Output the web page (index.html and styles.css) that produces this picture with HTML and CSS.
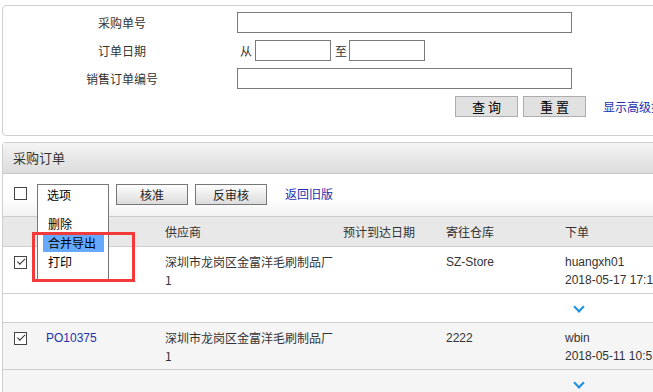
FILE: index.html
```html
<!DOCTYPE html>
<html lang="zh-CN">
<head>
<meta charset="utf-8">
<title>采购订单</title>
<link rel="stylesheet" href="styles.css">
</head>
<body>
<div class="page">
  <div class="search">
    <div class="srow">
      <div class="slabel">采购单号</div>
      <div class="sfield"><span class="inp wide"></span></div>
    </div>
    <div class="srow">
      <div class="slabel">订单日期</div>
      <div class="sfield"><span class="pre">从</span><span class="inp date"></span><span class="mid">至</span><span class="inp date"></span></div>
    </div>
    <div class="srow">
      <div class="slabel">销售订单编号</div>
      <div class="sfield"><span class="inp wide"></span></div>
    </div>
    <div class="srow actions">
      <span class="sbtn">查 询</span><span class="sbtn">重 置</span><a class="adv">显示高级搜索</a>
    </div>
  </div>

  <div class="list">
    <div class="ltitle">采购订单</div>
    <div class="toolbar">
      <span class="cb"></span>
      <span class="selbox">选项</span>
      <span class="tbtn b1">核准</span>
      <span class="tbtn b2">反审核</span>
      <a class="oldlink">返回旧版</a>
      <div class="droplist">
        <div class="opt first">删除</div>
        <div class="opt hl">合并导出</div>
        <div class="opt">打印</div>
      </div>
      <div class="redmark"></div>
    </div>
    <div class="grid head">
      <div></div><div></div><div>供应商</div><div>预计到达日期</div><div>寄往仓库</div><div>下单</div>
    </div>
    <div class="grid row">
      <div><span class="cb checked"></span></div>
      <div></div>
      <div class="sup">深圳市龙岗区金富洋毛刷制品厂1</div>
      <div></div>
      <div>SZ-Store</div>
      <div class="nowrap">huangxh01<br>2018-05-17 17:12:35</div>
    </div>
    <div class="grid expand">
      <div></div><div></div><div></div><div></div><div></div><div><span class="chev"></span></div>
    </div>
    <div class="grid row alt">
      <div><span class="cb checked"></span></div>
      <div><a class="po">PO10375</a></div>
      <div class="sup">深圳市龙岗区金富洋毛刷制品厂1</div>
      <div></div>
      <div>2222</div>
      <div class="nowrap">wbin<br>2018-05-11 10:51:20</div>
    </div>
    <div class="grid expand alt">
      <div></div><div></div><div></div><div></div><div></div><div><span class="chev"></span></div>
    </div>
  </div>
</div>
</body>
</html>
```

FILE: styles.css
```css
html, body {
  margin: 0;
  padding: 0;
  background: #fff;
  overflow: hidden;
  width: 653px;
  height: 392px;
}
.page {
  font-family: "Liberation Sans", "Noto Sans CJK SC", sans-serif;
  font-size: 12px;
  color: #333;
  padding: 5px 0 0 2px;
  width: 760px;
}
.search {
  border: 1px solid #d0d0d0;
  border-radius: 4px;
  height: 129px;
  padding-top: 6px;
  box-sizing: border-box;
  height: 131px;
}
.srow {
  display: flex;
  align-items: center;
  height: 21px;
  margin-bottom: 7px;
}
.slabel {
  width: 230px;
  padding-left: 4px;
  text-align: center;
  font-family: "Noto Sans CJK SC", sans-serif;
  font-size: 12px;
  color: #333;
  line-height: 21px;
}
.sfield {
  display: flex;
  align-items: center;
  height: 21px;
}
.inp {
  display: block;
  box-sizing: border-box;
  height: 21px;
  border: 1px solid #7a7a7a;
  background: #fff;
}
.inp.wide { width: 335px; }
.inp.date { width: 76px; }
.pre {
  width: 18px;
  padding-left: 3px;
  box-sizing: border-box;
  font-family: "Noto Sans CJK SC", sans-serif;
}
.mid {
  width: 18px;
  padding-left: 4px;
  box-sizing: border-box;
  font-family: "Noto Sans CJK SC", sans-serif;
}
.actions {
  padding-left: 452px;
}
.sbtn {
  box-sizing: border-box;
  width: 63px;
  height: 21px;
  border: 1px solid #adadad;
  background: #e1e1e1;
  text-align: center;
  line-height: 19px;
  font-family: "Noto Sans CJK SC", sans-serif;
  font-size: 13px;
  color: #000;
  margin-right: 5px;
}
.adv {
  margin-left: 12px;
  color: #1a2fb0;
  font-family: "Noto Sans CJK SC", sans-serif;
  font-size: 12px;
}

.list {
  margin-top: 6px;
  border: 1px solid #cfcfcf;
  border-right: none;
  border-radius: 4px 0 0 0;
}
.ltitle {
  height: 30px;
  line-height: 30px;
  padding-left: 10px;
  background: linear-gradient(#f4f4f4, #dcdcdc);
  border-bottom: 1px solid #c8c8c8;
  font-family: "Noto Sans CJK SC", sans-serif;
  font-size: 13px;
  color: #333;
}
.toolbar {
  position: relative;
  height: 43px;
  display: flex;
  align-items: flex-start;
  padding-top: 10px;
  box-sizing: border-box;
  background: linear-gradient(#fff 60%, #f1f1f1);
  border-bottom: 1px solid #cdcdcd;
}
.cb {
  display: inline-block;
  box-sizing: border-box;
  width: 13px;
  height: 13px;
  border: 1px solid #444;
  background: #fff;
  position: relative;
}
.toolbar .cb {
  margin: 3px 0 0 11px;
}
.cb.checked::after {
  content: "";
  position: absolute;
  left: 2px;
  top: 1px;
  width: 6px;
  height: 3px;
  border-left: 1px solid #333;
  border-bottom: 1px solid #333;
  transform: rotate(-45deg);
  transform-origin: 0 0;
  left: 2px;
  top: 5px;
  width: 7px;
  height: 3px;
}
.selbox {
  box-sizing: border-box;
  width: 72px;
  height: 22px;
  margin-left: 10px;
  border: 1px solid #777;
  border-bottom: none;
  background: #fff;
  padding-left: 9px;
  line-height: 20px;
  font-family: "Noto Sans CJK SC", sans-serif;
  font-size: 12px;
  color: #000;
}
.tbtn {
  box-sizing: border-box;
  height: 21px;
  border: 1px solid #777;
  background: linear-gradient(#fdfdfd, #dcdcdc);
  text-align: center;
  line-height: 19px;
  font-family: "Noto Sans CJK SC", sans-serif;
  font-size: 12px;
  color: #222;
}
.b1 { width: 72px; margin-left: 7px; }
.b2 { width: 72px; margin-left: 7px; }
.oldlink {
  margin-left: 18px;
  line-height: 19px;
  color: #1a2fb0;
  font-family: "Noto Sans CJK SC", sans-serif;
  font-size: 12px;
}
.droplist {
  position: absolute;
  left: 34px;
  top: 32px;
  width: 72px;
  height: 73px;
  box-sizing: border-box;
  border-left: 1px solid #777;
  border-right: 1px solid #777;
  background: #fff;
  padding: 0 4px 0 5px;
  z-index: 2;
  font-family: "Noto Sans CJK SC", sans-serif;
  font-size: 12px;
  color: #000;
}
.opt {
  height: 19px;
  line-height: 19px;
  padding-left: 5px;
}
.opt.first { margin-top: 8px; }
.opt.hl {
  background: #66aaff;
  color: #000;
}
.redmark {
  position: absolute;
  left: 29px;
  top: 58px;
  width: 103px;
  height: 50px;
  box-sizing: border-box;
  border: 3px solid #f23a3a;
  z-index: 3;
}
.grid {
  display: grid;
  grid-template-columns: 43px 119px 178px 103px 119px 1fr;
  border-bottom: 1px solid #cfcfcf;
}
.head {
  height: 29px;
  line-height: 29px;
  background: #e8e8e8;
  font-family: "Noto Sans CJK SC", sans-serif;
  color: #333;
}
.row {
  height: 46px;
  box-sizing: content-box;
  padding-top: 6px;
  height: 40px;
  line-height: 18px;
  background: #fff;
}
.row .cb {
  margin: 3px 0 0 11px;
  display: block;
}
.sup {
  font-family: "Noto Sans CJK SC", sans-serif;
  padding-right: 6px;
  font-size: 12px;
}
.nowrap { white-space: nowrap; }
.po { color: #2233aa; }
.alt { background: #f5f5f5; }
.expand {
  height: 28px;
}
.expand > div:last-child {
  position: relative;
}
.chev {
  position: absolute;
  left: 10px;
  top: 9px;
  width: 6px;
  height: 6px;
  border-right: 2px solid #1d8fe1;
  border-bottom: 2px solid #1d8fe1;
  transform: rotate(45deg);
}
```
